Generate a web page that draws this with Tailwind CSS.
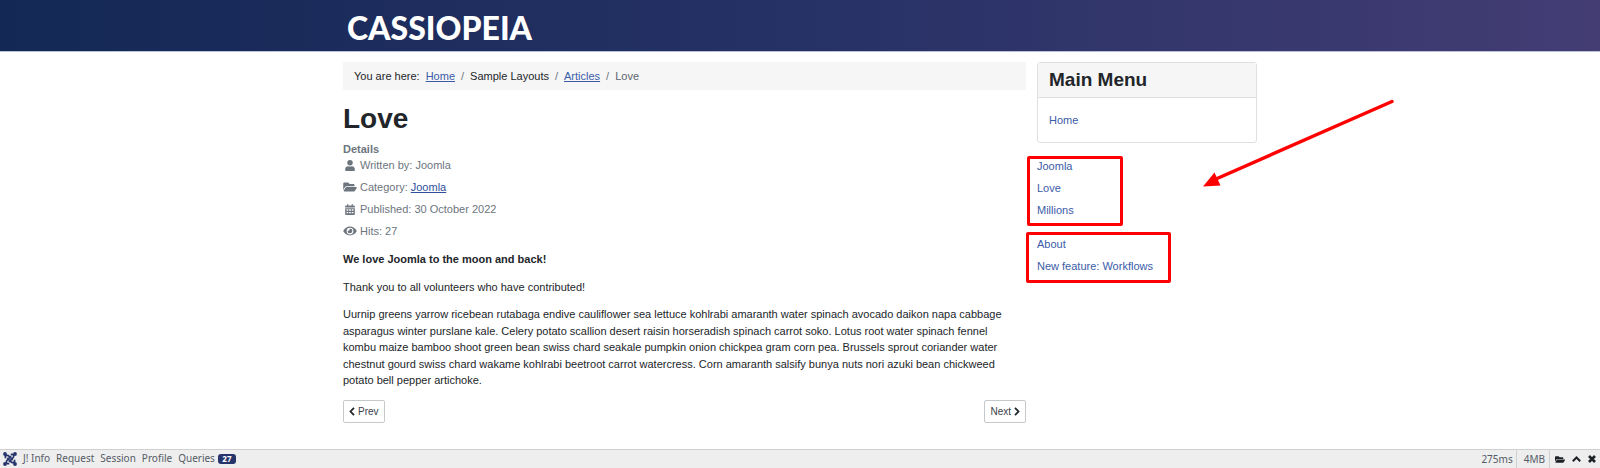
<!DOCTYPE html>
<html lang="en">
<head>
<meta charset="utf-8">
<meta name="viewport" content="width=device-width, initial-scale=1">
<title>Love - Cassiopeia</title>
<script src="https://cdn.jsdelivr.net/npm/@tailwindcss/browser@4"></script>
</head>
<body class="relative flex min-h-screen flex-col bg-white font-['Liberation_Sans',Arial,sans-serif] text-[11px] leading-normal text-[#22262a]">
<header class="border-b border-[#b9c0da] bg-linear-to-r from-[#132855] via-[#263165] to-[#433d74]">
  <div class="mx-auto flex h-[51px] max-w-[914px] items-center px-1">
    <a href="#" class="pt-1 font-[Lato,sans-serif] text-[32px] leading-none font-black text-white">CASSIOPEIA</a>
  </div>
</header>

<div class="mx-auto flex w-full max-w-[914px] grow gap-[11px] pt-[10px]">
  <main class="min-w-0 grow">
    <nav aria-label="Breadcrumbs" class="flex h-7 items-center bg-[#f6f6f6] px-[11px]">
      <span class="mr-[6px]">You are here:</span>
      <ol class="flex gap-[6px]">
        <li><a href="#" class="text-[#3a5ca8] underline">Home</a></li>
        <li class="text-[#6d757e]">/</li>
        <li>Sample Layouts</li>
        <li class="text-[#6d757e]">/</li>
        <li><a href="#" class="text-[#3a5ca8] underline">Articles</a></li>
        <li class="text-[#6d757e]">/</li>
        <li class="text-[#5d656e]">Love</li>
      </ol>
    </nav>
    <h1 class="mt-3 text-[28px] leading-[34px] font-bold">Love</h1>
    <dl class="mt-[5px] text-[#6d757e]">
      <dt class="leading-4 font-bold">Details</dt>
      <dd class="mb-[6px] flex h-4 items-center gap-[3px]">
        <svg class="h-[11px] w-[14px]" viewBox="0 0 448 512" fill="currentColor" aria-hidden="true"><path d="M224 256A128 128 0 1 0 224 0a128 128 0 0 0 0 256zm90 32h-17a174 174 0 0 1-146 0h-17C60 288 0 348 0 422v42c0 27 21 48 48 48h352c27 0 48-21 48-48v-42c0-74-60-134-134-134z"/></svg>
        <span>Written by: Joomla</span>
      </dd>
      <dd class="mb-[6px] flex h-4 items-center gap-[3px]">
        <svg class="h-[12px] w-[14px]" viewBox="0 0 576 512" fill="currentColor" aria-hidden="true"><path d="m573 295-73 125a48 48 0 0 1-41 24H45c-19 0-30-20-21-36L97 283a48 48 0 0 1 41-24h414c19 0 30 20 21 36zM138 227h342v-51c0-26-22-48-48-48H272l-64-64H48c-26 0-48 22-48 48v278l69-119c15-27 43-44 69-44z"/></svg>
        <span>Category: <a href="#" class="text-[#2f4f9b] underline">Joomla</a></span>
      </dd>
      <dd class="mb-[6px] flex h-4 items-center gap-[3px]">
        <svg class="h-[11px] w-[14px]" viewBox="0 0 448 512" fill="currentColor" aria-hidden="true"><path fill-rule="evenodd" d="M96 0h48v64h160V0h48v64h48c27 0 48 21 48 48v48H0v-48c0-27 21-48 48-48h48zM0 192h448v272c0 27-21 48-48 48H48c-27 0-48-21-48-48zm64 56v64h80v-64zm120 0v64h80v-64zm120 0v64h80v-64zM64 372v64h80v-64zm120 0v64h80v-64zm120 0v64h80v-64z"/></svg>
        <span>Published: <time datetime="2022-10-30">30 October 2022</time></span>
      </dd>
      <dd class="flex h-4 items-center gap-[3px]">
        <svg class="h-[12px] w-[14px]" viewBox="0 0 576 512" fill="currentColor" aria-hidden="true"><path fill-rule="evenodd" d="M572 241C518 135 410 64 288 64S58 135 4 241a32 32 0 0 0 0 30c54 106 162 177 284 177s230-71 284-177a32 32 0 0 0 0-30zM288 400a144 144 0 1 1 0-288 144 144 0 0 1 0 288zm0-240c-9 0-17 1-25 4a48 48 0 0 1-67 67 96 96 0 1 0 92-71z"/></svg>
        <span>Hits: 27</span>
      </dd>
    </dl>
    <div class="mt-3 space-y-[11px]">
      <p class="font-bold">We love Joomla to the moon and back!</p>
      <p>Thank you to all volunteers who have contributed!</p>
      <p class="pr-3">Uurnip greens yarrow ricebean rutabaga endive cauliflower sea lettuce kohlrabi amaranth water spinach avocado daikon napa cabbage asparagus winter purslane kale. Celery potato scallion desert raisin horseradish spinach carrot soko. Lotus root water spinach fennel kombu maize bamboo shoot green bean swiss chard seakale pumpkin onion chickpea gram corn pea. Brussels sprout coriander water chestnut gourd swiss chard wakame kohlrabi beetroot carrot watercress. Corn amaranth salsify bunya nuts nori azuki bean chickweed potato bell pepper artichoke.</p>
    </div>
    <nav aria-label="Articles" class="mt-[11px] flex justify-between text-[10px]">
      <a href="#" class="flex h-[23px] items-center gap-[3px] rounded-[2px] border border-[#c6c9cc] px-[5px] text-[#3b4148]">
        <svg class="h-[9px] w-[6px]" viewBox="0 0 6 9" fill="none" stroke="#22262a" stroke-width="1.8" aria-hidden="true"><path d="M5 .8 1.5 4.5 5 8.2"/></svg>Prev</a>
      <a href="#" class="flex h-[23px] items-center gap-[3px] rounded-[2px] border border-[#c6c9cc] px-[5px] text-[#3b4148]">Next
        <svg class="h-[9px] w-[6px]" viewBox="0 0 6 9" fill="none" stroke="#22262a" stroke-width="1.8" aria-hidden="true"><path d="M1 .8 4.5 4.5 1 8.2"/></svg></a>
    </nav>
  </main>

  <aside class="w-[220px] shrink-0 text-[#3a5ca8]">
    <section class="rounded-[3px] border border-[#dfe0e1]">
      <h2 class="border-b border-[#dfe0e1] bg-[#f6f6f6] px-[11px] py-[3px] text-[19px] leading-7 font-bold text-[#22262a]">Main Menu</h2>
      <div class="px-[11px] py-[14px]"><a href="#" class="block leading-4">Home</a></div>
    </section>
    <ul class="mt-[15px] space-y-[6px] leading-4">
      <li><a href="#">Joomla</a></li>
      <li><a href="#">Love</a></li>
      <li><a href="#">Millions</a></li>
    </ul>
    <ul class="mt-[18px] space-y-[6px] leading-4">
      <li><a href="#">About</a></li>
      <li><a href="#">New feature: Workflows</a></li>
    </ul>
  </aside>
</div>

<footer class="flex h-[19px] items-stretch justify-between border-t border-[#d0d0d0] bg-[#eee] pb-px font-['Noto_Sans',sans-serif] text-[10px] text-[#555b66]">
  <div class="flex items-center gap-[6px] pl-[3px]">
    <svg class="size-[14px]" viewBox="0 0 14 14" fill="none" stroke="#26346c" stroke-width="1.7" stroke-linejoin="round" aria-hidden="true"><path d="M2.600 6.200Q1.800 4 3.500 3.400 5 3 6.200 4.400L9.800 8M7.800 2.600Q10 1.800 10.600 3.500 11 5 9.600 6.200L6 9.800M11.400 7.800Q12.200 10 10.500 10.600 9 11 7.800 9.600L4.200 6M6.200 11.400Q4 12.200 3.400 10.500 3 9 4.400 7.800L8 4.200"/><g fill="#26346c" stroke="none"><circle cx="2" cy="2" r="1.900"/><circle cx="12" cy="2" r="1.900"/><circle cx="2" cy="12" r="1.900"/><circle cx="12" cy="12" r="1.900"/></g></svg>
    <button type="button">J! Info</button>
    <button type="button">Request</button>
    <button type="button">Session</button>
    <button type="button">Profile</button>
    <button type="button" class="flex items-center gap-[3px]">Queries <span class="mt-px flex h-[10px] w-[18px] items-center justify-center rounded-[3px] bg-[#26346c] text-[8px] font-bold text-white">27</span></button>
  </div>
  <div class="-mb-px flex">
    <span class="flex items-center border-r border-[#d0d0d0] pr-[3px]">275ms</span>
    <span class="flex items-center border-r border-[#d0d0d0] pr-1 pl-[7px]">4MB</span>
    <div class="flex items-center gap-[7px] pr-1 pl-[5px] text-[#1d2126]">
      <button type="button" aria-label="Open"><svg class="h-[9px] w-[10px]" viewBox="0 0 576 512" fill="currentColor"><path d="m573 295-73 125a48 48 0 0 1-41 24H45c-19 0-30-20-21-36L97 283a48 48 0 0 1 41-24h414c19 0 30 20 21 36zM138 227h342v-51c0-26-22-48-48-48H272l-64-64H48c-26 0-48 22-48 48v278l69-119c15-27 43-44 69-44z"/></svg></button>
      <button type="button" aria-label="Expand"><svg class="h-[6px] w-[9px]" viewBox="0 0 9 6" fill="none" stroke="currentColor" stroke-width="2"><path d="M.8 5.2 4.5 1.5 8.2 5.2"/></svg></button>
      <button type="button" aria-label="Close"><svg class="size-[8px]" viewBox="0 0 8 8" fill="none" stroke="currentColor" stroke-width="2.6"><path d="M1 1 7 7M7 1 1 7"/></svg></button>
    </div>
  </div>
</footer>

<!-- Annotations over the page -->
<div class="absolute top-[156px] left-[1027px] h-[70px] w-[96px] rounded-[2px] border-3 border-[#ff0000]"></div>
<div class="absolute top-[232px] left-[1026px] h-[51px] w-[145px] rounded-[2px] border-3 border-[#ff0000]"></div>
<svg class="absolute top-[96px] left-[1200px] h-[94px] w-[198px]" viewBox="0 0 198 94" aria-hidden="true"><path d="M192 5.5 16 83" stroke="#f00" stroke-width="3.4" stroke-linecap="round"/><path d="M3 90.5 14.5 76.5 20.5 89.5z" fill="#f00"/></svg>
</body>
</html>
